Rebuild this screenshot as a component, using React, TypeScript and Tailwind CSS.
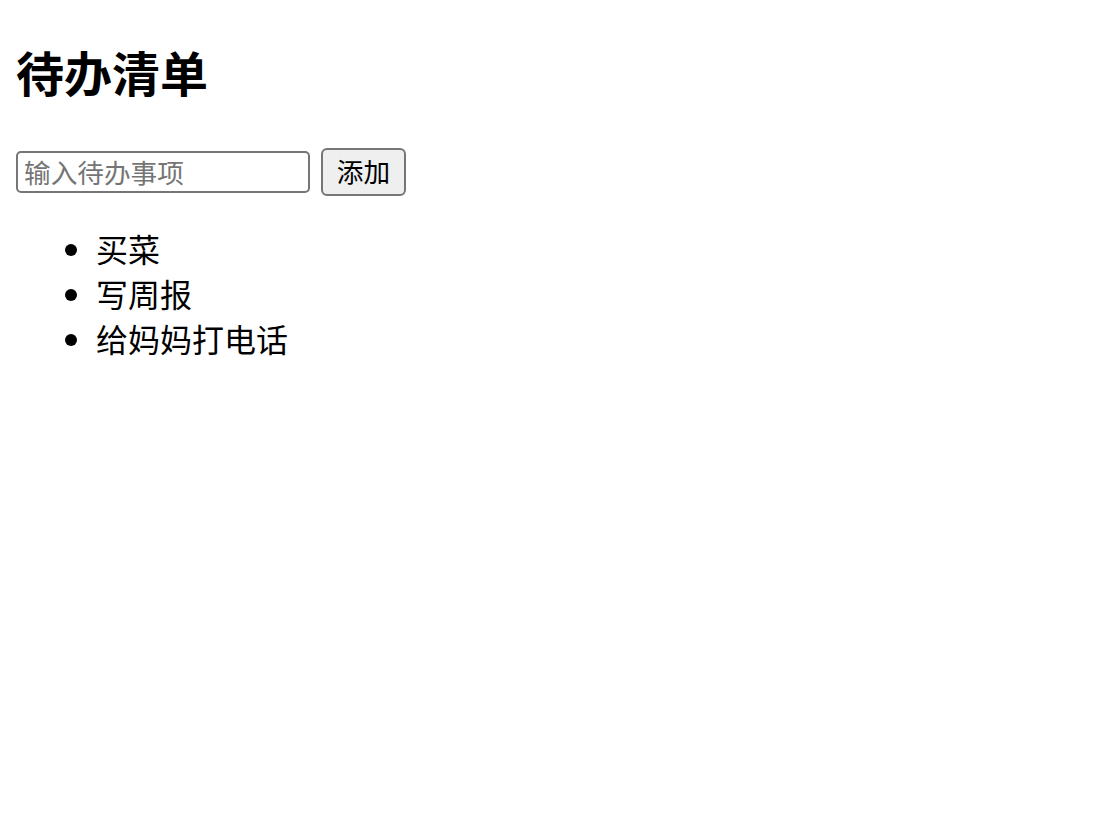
import { useState } from "react";

const App = () => {
  const [items, setItems] = useState<string[]>(["买菜", "写周报", "给妈妈打电话"]);
  const [text, setText] = useState("");

  const add = () => {
    if (!text.trim()) return;
    setItems([...items, text.trim()]);
    setText("");
  };

  return (
    <div
      className="min-h-screen bg-white px-4 pt-[36px] text-black"
      style={{ fontFamily: '"Noto Sans CJK SC", "Noto Sans", sans-serif' }}
    >
      <h1 className="m-0 text-[48px] font-bold leading-[70px]">待办清单</h1>
      <div className="mt-[42px] flex items-center gap-[11px]">
        <input
          value={text}
          onChange={(e) => setText(e.target.value)}
          placeholder="输入待办事项"
          className="h-[42px] w-[294px] rounded-[5px] border-2 border-[#767676] px-[6px] pb-[2px] text-[26.67px] leading-none text-black outline-none placeholder:text-[#757575]"
        />
        <button
          onClick={add}
          className="h-[48px] w-[85px] rounded-[6px] border-2 border-[#767676] bg-[#efefef] pb-[2px] text-[26.67px] leading-none text-black"
        >
          添加
        </button>
      </div>
      <ul className="mt-[30px] list-disc pl-[80px]">
        {items.map((item) => (
          <li key={item} className="text-[32px] leading-[45px]">
            {item}
          </li>
        ))}
      </ul>
    </div>
  );
};

export default App;
